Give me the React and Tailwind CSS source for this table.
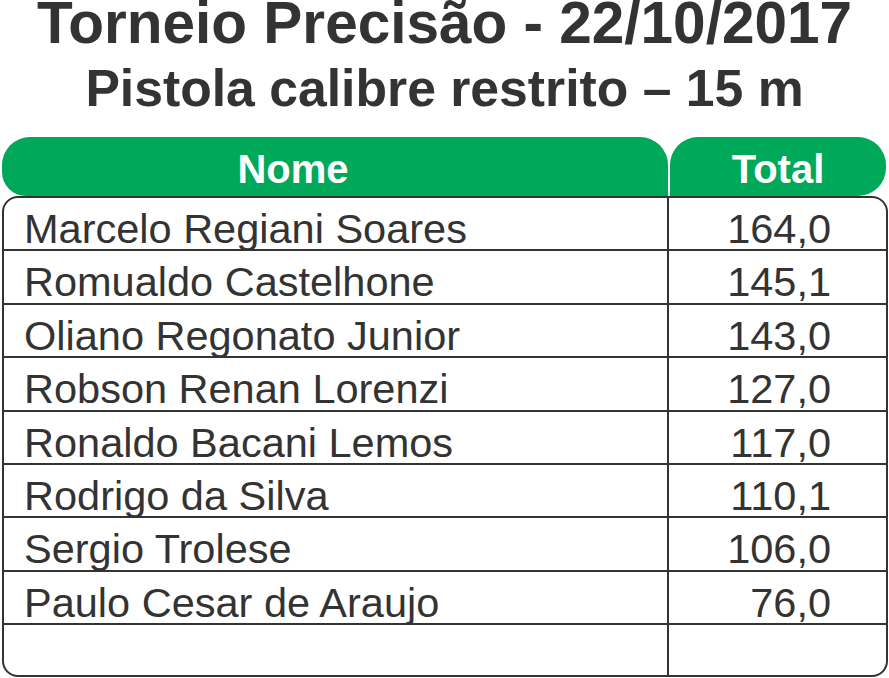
import React from 'react';

const rows = [
    { name: 'Marcelo Regiani Soares', total: '164,0' },
    { name: 'Romualdo Castelhone', total: '145,1' },
    { name: 'Oliano Regonato Junior', total: '143,0' },
    { name: 'Robson Renan Lorenzi', total: '127,0' },
    { name: 'Ronaldo Bacani Lemos', total: '117,0' },
    { name: 'Rodrigo da Silva', total: '110,1' },
    { name: 'Sergio Trolese', total: '106,0' },
    { name: 'Paulo Cesar de Araujo', total: '76,0' },
];

const App = () => {
    return (
        <div className="w-[889px] h-[678px] bg-white text-[#333333] font-[family-name:'Liberation_Sans',Arial,sans-serif] overflow-hidden">
            {/* Titles */}
            <h1 className="text-center font-bold text-[58.5px] leading-[46px]">
                Torneio Precisão - 22/10/2017
            </h1>
            <h2 className="mt-[12px] text-center font-bold text-[51.7px] leading-[60px]">
                Pistola calibre restrito – 15 m
            </h2>

            {/* Header */}
            <div className="mt-[19px] flex pl-[2px] gap-[2px]">
                <div className="w-[666px] h-[59px] bg-[#00a859] rounded-tl-[28px] rounded-bl-[24px] rounded-tr-[28px] text-white font-bold text-[40px] leading-[54px] pt-[5px] text-center pr-[84px]">
                    Nome
                </div>
                <div className="w-[216px] h-[59px] bg-[#00a859] rounded-tl-[28px] rounded-r-[28px] text-white font-bold text-[40px] leading-[54px] pt-[5px] text-center">
                    Total
                </div>
            </div>

            {/* Body */}
            <div className="ml-[2px] w-[886px] h-[481px] border-2 border-[#333333] rounded-[16px] flex flex-col overflow-hidden">
                {rows.map((r) => (
                    <div key={r.name} className="flex h-[53.4px] border-b-2 border-[#333333]">
                        <div className="w-[663px] pl-[20px] pt-[10px] text-[41.5px] leading-[42px] whitespace-nowrap">
                            {r.name}
                        </div>
                        <div className="flex-1 border-l-2 border-[#333333] pr-[55px] pt-[10px] text-[41.5px] leading-[42px] text-right">
                            {r.total}
                        </div>
                    </div>
                ))}
                <div className="flex flex-1">
                    <div className="w-[663px]" />
                    <div className="flex-1 border-l-2 border-[#333333]" />
                </div>
            </div>
        </div>
    );
};

export default App;
